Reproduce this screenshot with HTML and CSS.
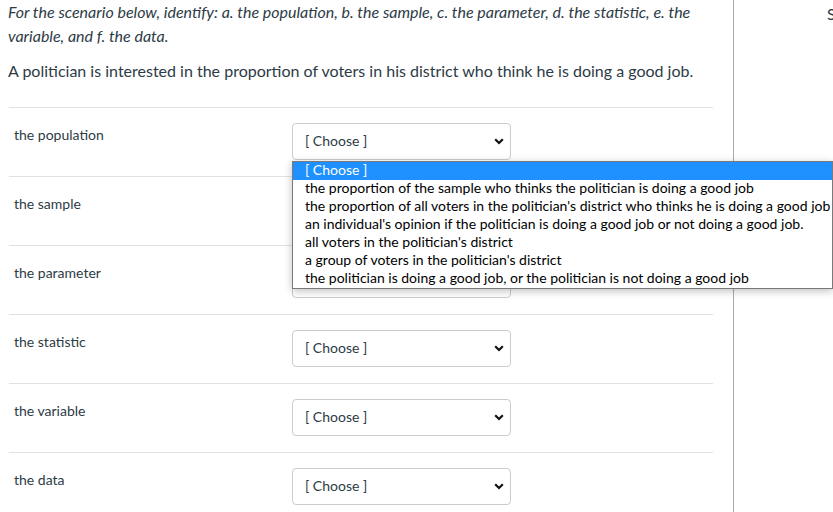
FILE: index.html
```html
<!DOCTYPE html>
<html>
<head>
<meta charset="utf-8">
<link rel="stylesheet" href="styles.css">
</head>
<body>
<div class="page">
  <main class="question">
    <p class="prompt">For the scenario below, identify: a. the population, b. the sample, c. the parameter, d. the statistic, e. the variable, and f. the data.</p>
    <p class="scenario">A politician is interested in the proportion of voters in his district who think he is doing a good job.</p>
    <div class="rows">
      <div class="row">
        <div class="label">the population</div>
        <div class="field">
          <div class="select"><span>[ Choose ]</span><svg class="chev" width="10" height="7" viewBox="0 0 10 7"><path d="M1.2 1.2 L5 5 L8.8 1.2" fill="none" stroke="#111" stroke-width="2.2"/></svg></div>
          <ul class="listbox">
            <li class="selected">[ Choose ]</li>
            <li>the proportion of the sample who thinks the politician is doing a good job</li>
            <li>the proportion of all voters in the politician's district who thinks he is doing a good job</li>
            <li>an individual's opinion if the politician is doing a good job or not doing a good job.</li>
            <li>all voters in the politician's district</li>
            <li>a group of voters in the politician's district</li>
            <li>the politician is doing a good job, or the politician is not doing a good job</li>
          </ul>
        </div>
      </div>
      <div class="row">
        <div class="label">the sample</div>
        <div class="field"><div class="select"><span>[ Choose ]</span><svg class="chev" width="10" height="7" viewBox="0 0 10 7"><path d="M1.2 1.2 L5 5 L8.8 1.2" fill="none" stroke="#111" stroke-width="2.2"/></svg></div></div>
      </div>
      <div class="row">
        <div class="label">the parameter</div>
        <div class="field"><div class="select"><span>[ Choose ]</span><svg class="chev" width="10" height="7" viewBox="0 0 10 7"><path d="M1.2 1.2 L5 5 L8.8 1.2" fill="none" stroke="#111" stroke-width="2.2"/></svg></div></div>
      </div>
      <div class="row">
        <div class="label">the statistic</div>
        <div class="field"><div class="select"><span>[ Choose ]</span><svg class="chev" width="10" height="7" viewBox="0 0 10 7"><path d="M1.2 1.2 L5 5 L8.8 1.2" fill="none" stroke="#111" stroke-width="2.2"/></svg></div></div>
      </div>
      <div class="row">
        <div class="label">the variable</div>
        <div class="field"><div class="select"><span>[ Choose ]</span><svg class="chev" width="10" height="7" viewBox="0 0 10 7"><path d="M1.2 1.2 L5 5 L8.8 1.2" fill="none" stroke="#111" stroke-width="2.2"/></svg></div></div>
      </div>
      <div class="row">
        <div class="label">the data</div>
        <div class="field"><div class="select"><span>[ Choose ]</span><svg class="chev" width="10" height="7" viewBox="0 0 10 7"><path d="M1.2 1.2 L5 5 L8.8 1.2" fill="none" stroke="#111" stroke-width="2.2"/></svg></div></div>
      </div>
    </div>
  </main>
  <aside class="side"><span class="side-text">Submit</span></aside>
</div>
</body>
</html>
```
FILE: styles.css
```css
html, body {
  margin: 0;
  padding: 0;
  background: #fff;
  overflow: hidden;
}
body {
  font-family: Lato, "Noto Sans", sans-serif;
  color: #2d3b45;
  width: 833px;
  height: 512px;
}
.page {
  display: flex;
  height: 512px;
}
.question {
  width: 705px;
  padding-left: 8px;
  flex: none;
}
.prompt {
  margin: 0;
  font-size: 16px;
  line-height: 24px;
  font-style: italic;
}
.scenario {
  margin: 11px 0 0;
  font-size: 16px;
  line-height: 24px;
}
.rows {
  margin-top: 24px;
  margin-left: 1px;
}
.row {
  display: grid;
  grid-template-columns: 283px 1fr;
  border-top: 1px solid #dfe2e5;
  height: 68px;
}
.label {
  font-size: 14px;
  line-height: 21px;
  padding: 16px 0 0 5px;
}
.field {
  position: relative;
  padding-top: 15px;
}
.select {
  box-sizing: border-box;
  width: 219px;
  height: 37px;
  border: 1px solid #c7cdd1;
  border-radius: 4px;
  background: #fff;
  display: flex;
  align-items: center;
  justify-content: space-between;
  padding: 0 6px 2px 12px;
  font-size: 14px;
}
.chev {
  display: block;
  margin-top: 2px;
}
.listbox {
  position: absolute;
  top: 53px;
  left: 0;
  width: 541px;
  box-sizing: border-box;
  margin: 0;
  padding: 0;
  list-style: none;
  background: #fff;
  border: 1px solid #7a7a7a;
  box-shadow: 0 2px 8px rgba(0, 0, 0, 0.25);
  z-index: 5;
  font-size: 14px;
  color: #000;
}
.listbox li {
  height: 16px;
  line-height: 16px;
  padding: 0 0 2px 12px;
  white-space: nowrap;
}
.listbox li.selected {
  background: #1e90ff;
  color: #fff;
}
.side {
  flex: 1;
  margin-left: 20px;
  border-left: 1px solid #a5acb0;
  overflow: hidden;
}
.side-text {
  display: block;
  padding: 2px 0 0 93px;
  font-size: 16px;
  line-height: 24px;
  white-space: nowrap;
}
```
